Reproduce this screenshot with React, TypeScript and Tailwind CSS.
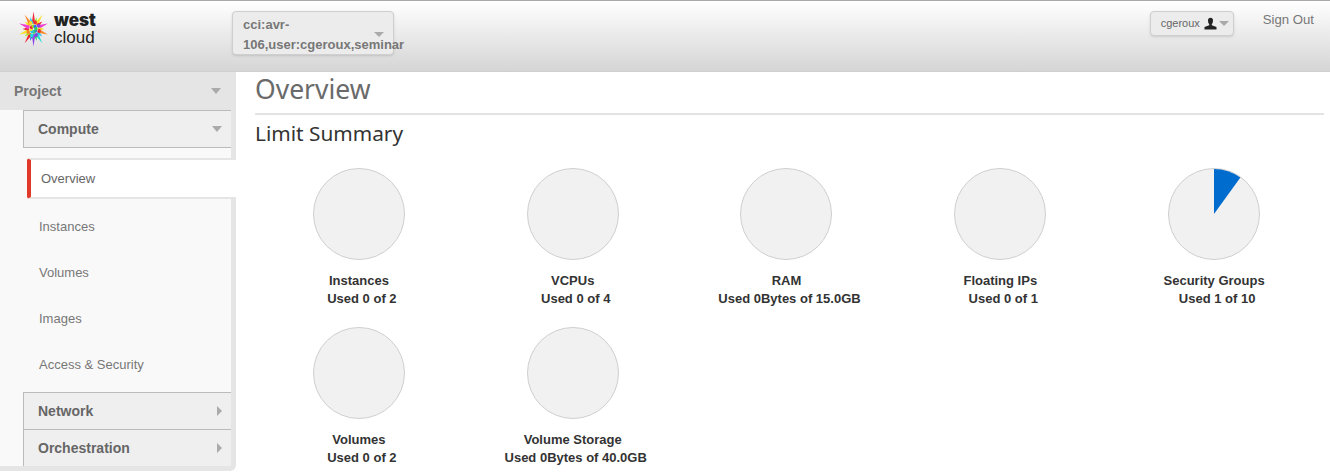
const sans = 'font-["Liberation_Sans",Arial,sans-serif]'

const limits = [
  { name: 'Instances', used: 'Used 0 of 2' },
  { name: 'VCPUs', used: 'Used 0 of 4' },
  { name: 'RAM', used: 'Used 0Bytes of 15.0GB' },
  { name: 'Floating IPs', used: 'Used 0 of 1' },
  { name: 'Security Groups', used: 'Used 1 of 10', slice: true },
  { name: 'Volumes', used: 'Used 0 of 2' },
  { name: 'Volume Storage', used: 'Used 0Bytes of 40.0GB' },
]

const links = ['Instances', 'Volumes', 'Images', 'Access & Security']

const burstColors = ['#ee2a35', '#2bc4f0', '#f5e02a', '#35d060', '#ee3fd0', '#2a6cf0', '#f58a2a', '#a6e52a', '#22e0d0', '#ee2a35', '#8a3fe8', '#f5e02a']

function Logo() {
  return (
    <svg width="31" height="36" viewBox="-18.500 -18.500 37 37" preserveAspectRatio="none" className="shrink-0">
      {Array.from({ length: 20 }).map((_, i) => {
        const r = i % 2 === 0 ? 18 : 13
        const a = (i / 20) * Math.PI * 2 - Math.PI / 2
        const b = a + 0.36
        const c = a - 0.36
        return (
          <polygon
            key={i}
            points={`${Math.cos(a) * r},${Math.sin(a) * r} ${Math.cos(b) * 6},${Math.sin(b) * 6} ${Math.cos(c) * 6},${Math.sin(c) * 6}`}
            fill={burstColors[(i * 7) % burstColors.length]}
          />
        )
      })}
      {Array.from({ length: 16 }).map((_, i) => {
        const a = (i / 16) * Math.PI * 2 + 0.3
        const d = i % 2 === 0 ? 7 : 3
        return (
          <circle
            key={i}
            cx={Math.cos(a) * d}
            cy={Math.sin(a) * d}
            r="2"
            fill={burstColors[(i * 5) % burstColors.length]}
          />
        )
      })}
    </svg>
  )
}

function Caret({ wide }: { wide?: boolean }) {
  return (
    <span
      className={
        wide
          ? 'h-0 w-0 border-x-[5.5px] border-t-[6px] border-x-transparent border-t-[#aaaaaa]'
          : 'h-0 w-0 border-x-[5px] border-t-[5px] border-x-transparent border-t-[#aaaaaa]'
      }
    />
  )
}

function CaretRight() {
  return <span className="h-0 w-0 border-y-[5px] border-l-[5px] border-y-transparent border-l-[#aaaaaa]" />
}

function PieChart({ slice }: { slice?: boolean }) {
  return (
    <svg width="92" height="92" viewBox="0 0 92 92">
      <circle cx="46" cy="46" r="45.5" fill="#f1f1f1" stroke="#cfcfcf" />
      {slice && <path d="M46 46 L46 1 A45 45 0 0 1 72.4 9.6 Z" fill="#006cce" />}
    </svg>
  )
}

export default function App() {
  return (
    <div className={`flex h-[472px] w-[1330px] flex-col overflow-hidden bg-white ${sans}`}>
      <header className="flex h-[72px] shrink-0 border-t border-b border-t-[#a9a9a9] border-b-[#cfcfcf] bg-gradient-to-b from-white to-[#d5d5d5]">
        <div className="flex w-[232px] items-start gap-[5px] pl-[18px] pt-[10px]">
          <Logo />
          <div className="text-[#222222]">
            <div className='font-["Inter",sans-serif] text-[17px] leading-[18px] font-black'>west</div>
            <div className="text-[17px] leading-[18px]">cloud</div>
          </div>
        </div>
        <div className="relative mt-[10px] h-[44px] w-[162px] rounded border border-[#cfcfcf] bg-[#ececec] pl-[10px] text-[13px] leading-[19.5px] font-bold text-[#777777] shadow-sm">
          <div className="whitespace-nowrap pt-[3px]">
            cci:avr-
            <br />
            106,user:cgeroux,seminar
          </div>
          <span className="absolute top-[20px] right-[9px] flex">
            <Caret />
          </span>
        </div>
        <div className="ml-auto flex items-start">
          <div className="mt-[10px] flex h-[25px] w-[84px] items-center rounded border border-[#cfcfcf] bg-[#ececec] pl-[10px] text-[11px] text-[#666666] shadow-sm">
            cgeroux
            <svg width="13" height="13" viewBox="0 0 13 13" className="ml-[4px]">
              <path d="M4 3.5a2.5 2.8 0 0 1 5 0c0 1.5-.5 3-1.2 3.6v1.2L12.5 10v2.5H.5V10l4.7-1.7V7.100C4.500 6.500 4 5 4 3.500Z" fill="#222222" />
            </svg>
            <span className="ml-[2px] flex">
              <Caret />
            </span>
          </div>
          <div className="mt-[11px] mr-[16px] ml-[29px] text-[13.2px] leading-[16px] text-[#777777]">Sign Out</div>
        </div>
      </header>

      <div className="flex min-h-0 flex-1">
        <aside className="h-[399px] w-[236px] shrink-0 rounded-br-md bg-[#e5e5e5] pr-[5px] pb-[5px]">
          <div className="flex h-full flex-col bg-[#f9f9f9]">
            <div className="-mr-[5px] flex h-[38px] shrink-0 items-center justify-between bg-[#e5e5e5] pr-[15px] pl-[14px] text-[14px] font-bold text-[#777777]">
              Project
              <Caret wide />
            </div>
            <div className="ml-[23px] flex flex-1 flex-col">
              <div className="flex h-[38px] shrink-0 items-center justify-between border border-r-0 border-[#bbbbbb] bg-[#efefef] pr-[9px] pl-[14px] text-[14px] font-bold text-[#666666]">
                Compute
                <Caret wide />
              </div>
              <div className="-mr-[5px] mt-[10px] ml-[4px] flex h-[41px] shrink-0 items-center rounded-l-[3px] border-y-2 border-l-4 border-y-[#e5e5e5] border-l-[#e0392a] bg-white pl-[10px] text-[13px] text-[#666666]">
                Overview
              </div>
              <div className="flex flex-1 flex-col pt-[5px] pl-[16px] text-[13px] text-[#777777]">
                {links.map((link) => (
                  <div key={link} className="flex h-[46px] items-center">
                    {link}
                  </div>
                ))}
              </div>
              <div className="flex h-[37px] shrink-0 items-center justify-between border-t border-l border-[#bbbbbb] bg-[#efefef] pr-[9px] pl-[14px] text-[14px] font-bold text-[#666666]">
                Network
                <CaretRight />
              </div>
              <div className="flex h-[37px] shrink-0 items-center justify-between border-t border-l border-[#bbbbbb] bg-[#efefef] pr-[9px] pl-[14px] text-[14px] font-bold text-[#666666]">
                Orchestration
                <CaretRight />
              </div>
            </div>
          </div>
        </aside>

        <main className="min-w-0 flex-1 pl-[19px]">
          <h1 className='h-[43px] w-[1069px] border-b-2 border-[#e3e3e3] font-["Noto_Sans",sans-serif] text-[26.500px] leading-[35px] text-[#6a6a6a]'>
            Overview
          </h1>
          <h2 className='mt-[4px] font-["Noto_Sans",sans-serif] text-[20.800px] leading-[28px] text-[#333333]'>Limit Summary</h2>
          <div className="-ml-[3px] mt-[21px] grid w-[1069px] grid-cols-5">
            {limits.map((limit) => (
              <div key={limit.name} className="flex h-[159px] flex-col items-center text-[13px] font-bold text-[#333333]">
                <PieChart slice={limit.slice} />
                <div className="mt-[12px] leading-[18px]">{limit.name}</div>
                <div className="pl-[6px] leading-[18px]">{limit.used}</div>
              </div>
            ))}
          </div>
        </main>
      </div>
    </div>
  )
}
